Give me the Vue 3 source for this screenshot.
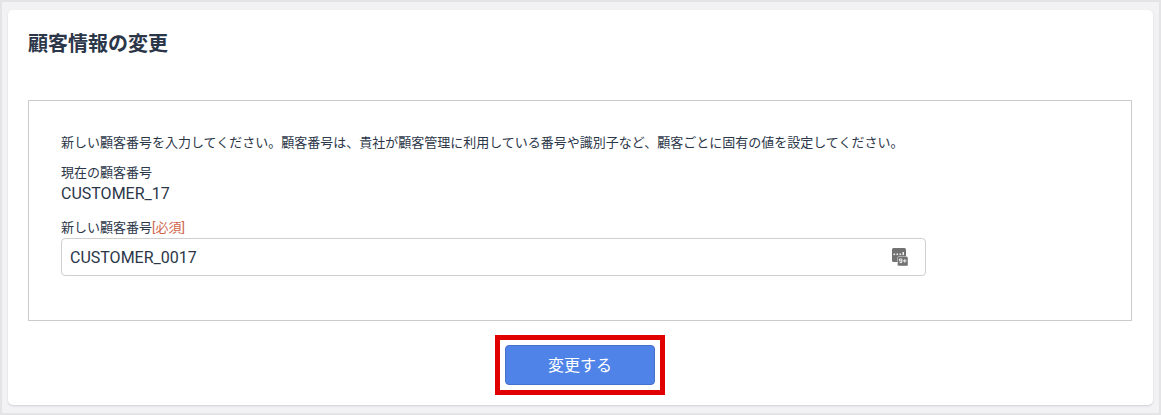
<script setup>
const intro = '新しい顧客番号を入力してください。顧客番号は、貴社が顧客管理に利用している番号や識別子など、顧客ごとに固有の値を設定してください。'
</script>

<template>
  <div class="page">
    <main class="card">
      <h1 class="title">顧客情報の変更</h1>
      <section class="box">
        <p class="intro">{{ intro }}</p>
        <div class="label">現在の顧客番号</div>
        <div class="current">CUSTOMER_17</div>
        <div class="label new-label">新しい顧客番号<span class="req">[必須]</span></div>
        <div class="input">
          <span class="value">CUSTOMER_0017</span>
          <svg class="key" width="16" height="18" viewBox="0 0 16 18" aria-hidden="true">
            <rect x="0" y="0" width="14" height="14" rx="1.5" fill="#727272" />
            <rect x="5.5" y="8.5" width="10.5" height="9.5" rx="1.5" fill="#727272" stroke="#e6e6e6" stroke-width="0.5" />
            <g fill="#f0f0f0">
              <rect x="1.5" y="5.5" width="1.6" height="1.6" />
              <rect x="4.5" y="5.5" width="1.6" height="1.6" />
              <rect x="7.5" y="5.5" width="1.6" height="1.6" />
              <rect x="10.5" y="4" width="1.5" height="3.1" />
            </g>
            <path d="M7.5 11h2.4v3.6H7.5M7.5 11v1.9h2.4M11 12.9h3.6M12.8 11.1v3.6" fill="none" stroke="#f0f0f0" stroke-width="1" />
          </svg>
        </div>
      </section>
      <div class="actions">
        <div class="mark">
          <button class="submit" type="button">変更する</button>
        </div>
      </div>
    </main>
  </div>
</template>

<style>
html, body { margin: 0; background: #f2f2f4; }
</style>

<style scoped>
.page {
  box-sizing: border-box;
  width: 1161px;
  height: 415px;
  padding: 8px 6px;
  background: #f2f2f4;
  border: 2px solid #e4e4e6;
  font-family: Roboto, "Noto Sans CJK JP", sans-serif;
  color: #2b3648;
  overflow: hidden;
}
.card {
  box-sizing: border-box;
  width: 1145px;
  height: 395px;
  padding: 0 21px 0 20px;
  background: #fff;
  border-radius: 5px;
  box-shadow: 0 1px 2px rgba(0, 0, 0, 0.14);
}
.title {
  margin: 0;
  padding-top: 22px;
  height: 68px;
  box-sizing: border-box;
  font-size: 20px;
  line-height: 24px;
  font-weight: 700;
  color: #2b3648;
}
.box {
  box-sizing: border-box;
  height: 221px;
  margin-top: 22px;
  padding: 33px 32px 0;
  border: 1px solid #cbcbcb;
}
.intro {
  margin: 0;
  font-size: 13px;
  line-height: 17px;
}
.label {
  margin-top: 13px;
  font-size: 13px;
  line-height: 17px;
}
.current {
  margin-top: 3px;
  font-size: 16px;
  line-height: 20px;
}
.new-label {
  margin-top: 15px;
}
.req {
  color: #d0654c;
}
.input {
  box-sizing: border-box;
  display: flex;
  align-items: center;
  justify-content: space-between;
  width: 865px;
  height: 38px;
  margin-top: 2px;
  padding: 0 17px 0 8px;
  border: 1px solid #cfcfcf;
  border-radius: 4px;
  font-size: 16px;
}
.key {
  flex: none;
}
.actions {
  display: flex;
  justify-content: center;
  margin-top: 14px;
}
.mark {
  box-sizing: border-box;
  width: 170px;
  height: 60px;
  padding: 5px;
  border: 5px solid #e00000;
}
.submit {
  display: block;
  box-sizing: border-box;
  width: 100%;
  height: 100%;
  margin: 0;
  padding: 0 0 3px;
  background: #5083e8;
  border: 1px solid #4570cc;
  border-radius: 4px;
  color: #fff;
  font-family: inherit;
  font-size: 16px;
}
</style>
